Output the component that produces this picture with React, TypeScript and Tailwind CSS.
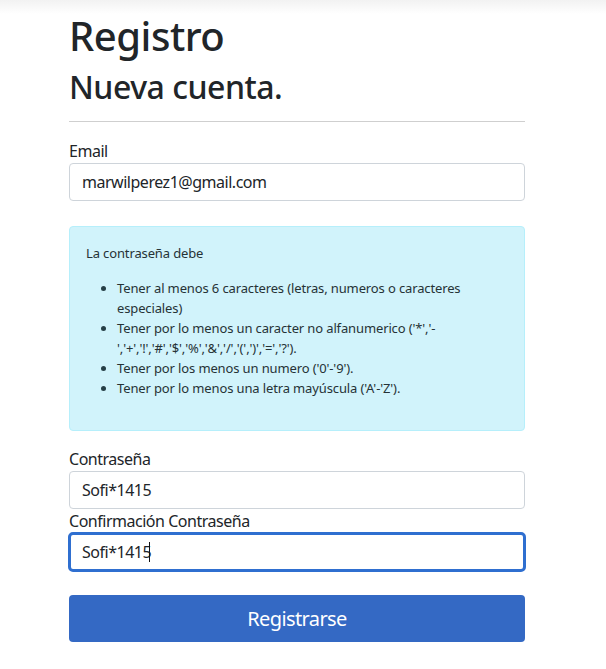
export default function App() {
  return (
    <div className="min-h-screen bg-white text-[#212529] font-['Noto_Sans',sans-serif] tracking-[-0.03em]">
      {/* navbar shadow */}
      <div className="h-[14px] bg-gradient-to-b from-[#f2f2f2] to-white" />
      <div className="ml-[69px] w-[456px]">
        <h1 className="text-[40px] leading-[1.2] font-medium -mt-[2px]">Registro</h1>
        <h2 className="text-[32px] leading-[1.2] font-medium mt-[8px]">Nueva cuenta.</h2>
        <hr className="mt-[15px] mb-[17px] border-t border-[#cfcfcf]" />

        <form className="flex flex-col">
          <label className="text-base leading-6">Email</label>
          <input
            className="h-[38px] rounded border border-[#ced4da] px-3 text-base tracking-[-0.03em] outline-none"
            defaultValue="marwilperez1@gmail.com"
          />

          <div className="mt-[25px] rounded border border-[#b6effb] bg-[#d1f3fb] px-4 pt-[11px] pb-[32px] text-[13px] leading-5 tracking-[-0.01em] text-[#263236]">
            <p className="py-[5px]">La contraseña debe</p>
            <ul className="mt-[10px] list-disc pl-[31px] marker:text-[#263f47]">
              <li>Tener al menos 6 caracteres (letras, numeros o caracteres especiales)</li>
              <li>Tener por lo menos un caracter no alfanumerico ('*','-','+','!','#','$','%','&amp;','/','(',')','=','?').</li>
              <li>Tener por los menos un numero ('0'-'9').</li>
              <li>Tener por lo menos una letra mayúscula ('A'-'Z').</li>
            </ul>
          </div>

          <label className="mt-[16px] text-base leading-6">Contraseña</label>
          <input
            className="h-[38px] rounded border border-[#ced4da] px-3 text-base tracking-[-0.03em] outline-none"
            defaultValue="Sofi*1415"
          />
          <label className="text-base leading-6">Confirmación Contraseña</label>
          <div className="relative -mx-[1px] -mt-[1px]">
            <input
              className="h-[40px] w-full rounded-[5px] border-[3px] border-[#2f6fd0] px-[11px] text-base tracking-[-0.03em] outline-none"
              defaultValue="Sofi*1415"
            />
            {/* text caret */}
            <span className="absolute left-[81px] top-[10px] h-[20px] w-px bg-[#111]" />
          </div>

          <button
            type="button"
            className="mt-[23px] h-[47px] rounded bg-[#3469c4] text-[20px] tracking-[-0.03em] text-white"
          >
            Registrarse
          </button>
        </form>
      </div>
    </div>
  );
}
